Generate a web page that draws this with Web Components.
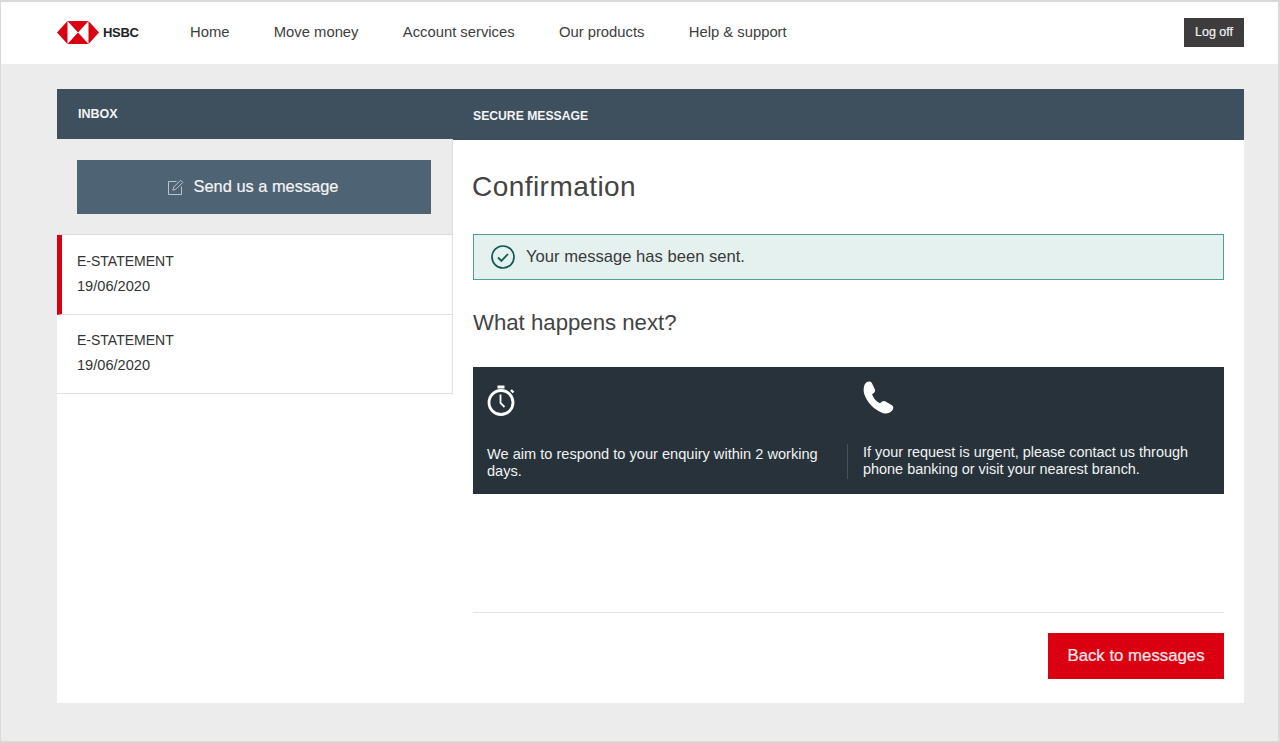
<!DOCTYPE html>
<html lang="en"><head><meta charset="utf-8"><title>HSBC Secure Message</title>
<style>
html,body{margin:0;padding:0;height:743px;overflow:hidden;background:#ececec;font-family:"Liberation Sans",Arial,sans-serif;color:#333}
</style></head><body>
<bank-page>
  <bank-header slot="header">
    <nav-link>Home</nav-link><nav-link>Move money</nav-link><nav-link>Account services</nav-link><nav-link>Our products</nav-link><nav-link>Help &amp; support</nav-link>
  </bank-header>
  <inbox-panel slot="left">
    <message-item active subject="E-STATEMENT" date="19/06/2020"></message-item>
    <message-item subject="E-STATEMENT" date="19/06/2020"></message-item>
  </inbox-panel>
  <secure-message slot="right"></secure-message>
</bank-page>
<script>
function def(name,html){customElements.define(name,class extends HTMLElement{constructor(){super();this.attachShadow({mode:'open'}).innerHTML=typeof html==='function'?html(this):html}})}
def('bank-page',`<style>
:host{display:flex;flex-direction:column;box-sizing:border-box;height:743px;border:solid #d9d9d9;border-width:2px 2px 2px 1px}
main{flex:1;display:flex;padding:25px 34px 38px 56px;min-height:0}
.card{flex:1;display:grid;grid-template-columns:396px 791px;background:#fff}
</style><slot name="header"></slot><main><div class="card"><slot name="left"></slot><slot name="right"></slot></div></main>`);
def('bank-header',`<style>
:host{display:flex;align-items:center;height:62px;background:#fff;padding:0 34px 0 56px;flex:none}
svg{display:block}
.logo{display:flex;align-items:center;gap:4px;width:133px;flex:none;margin-top:-1px}
b{font:700 13px "Liberation Sans",Arial,sans-serif;color:#222;letter-spacing:-.3px}
nav{display:flex;gap:44.300px;flex:1;margin-top:-3px}
button{all:unset;box-sizing:border-box;width:60px;height:29px;margin-top:-2px;background:#3e3c3c;color:#f2f2f2;font:400 12.500px "Liberation Sans",Arial,sans-serif;text-align:center;line-height:29px;-webkit-text-stroke:.2px #f2f2f2}
</style><div class="logo"><svg width="42" height="23" viewBox="0 0 42 23" aria-hidden="true"><path fill="#fff" d="M10.500 0h21v23h-21z"/><path fill="#db0011" d="M0 11.500 10.500 0v23zM42 11.500 31.500 0v23zM10.500 0h21L21 11.500zM10.500 23h21L21 11.500z"/></svg><b>HSBC</b></div><nav><slot></slot></nav><button>Log off</button>`);
def('nav-link',`<style>:host{display:block;font-size:14.800px;color:#3d3d3d;line-height:20px}</style><slot></slot>`);
def('inbox-panel',`<style>
:host{display:flex;flex-direction:column;background:#fff;min-width:0}
.bar{height:50px;background:#3e505d;color:#f5f5f5;font:700 12.500px/50px "Liberation Sans",Arial,sans-serif;padding-left:21px}
.send{box-sizing:border-box;height:96px;background:#ececec;border:solid #dcdcdc;border-width:0 1px 1px 0;padding:21px 21px 20px 20px}
button{all:unset;box-sizing:border-box;display:flex;align-items:center;justify-content:center;gap:10px;width:100%;height:54px;padding-bottom:1px;padding-right:2px;background:#4e6374;color:#f4f4f4;font:500 16.400px "Liberation Sans",Arial,sans-serif;-webkit-text-stroke:.2px #f4f4f4}
</style><div class="bar">INBOX</div><div class="send"><button><svg width="16" height="16" viewBox="0 0 16 16" fill="none" stroke="#b9c4cc" stroke-width="1" aria-hidden="true"><path d="M8.500 2.500H.5v13h13v-8"/><path d="M4.800 11.200l1-3.200 6.800-6.800 2.200 2.200L8 10.200z"/></svg>Send us a message</button></div><slot></slot>`);
def('message-item',el=>`<style>
:host{display:block;box-sizing:border-box;height:79px;background:#fff;border:solid #e0e0e0;border-width:0 1px 1px 0;padding:13px 0 0 20px;font-size:14.600px;line-height:25px;color:#333}
:host([active]){border-left:5px solid #db0011;padding:14px 0 0 15px;height:80px}
.s{font-size:14px}
</style><div class="s">${el.getAttribute('subject')||''}</div><div>${el.getAttribute('date')||''}</div>`);
def('secure-message',`<style>
:host{display:flex;flex-direction:column;min-width:0;background:#fff}
.bar{height:51px;background:#3e505d;color:#f5f5f5;font:700 12.200px/54px "Liberation Sans",Arial,sans-serif;padding-left:20px;flex:none}
.body{flex:1;display:flex;flex-direction:column;padding:0 20px 24px 20px}
h1{font:400 28px/34px "Liberation Sans",Arial,sans-serif;color:#444;margin:30px 0 30px -1px;letter-spacing:.45px}
.alert{box-sizing:border-box;height:46px;display:flex;align-items:center;gap:11px;padding-left:17px;background:#e5f1ef;border:1px solid #4f9f95;font-size:16.600px;color:#3a3a3a}
h2{font:400 22.200px/30px "Liberation Sans",Arial,sans-serif;color:#444;margin:28px 0 29px}
.dark{height:127px;display:grid;grid-template-columns:374px 1fr;background:#27323b;color:#f2f2f2;font-size:14.600px;line-height:17px;flex:none}
.c1{padding:17px 14px 0 14px;display:flex;flex-direction:column}
.c1 svg{height:33px;width:30px;margin-bottom:29px}
.c2{display:flex;flex-direction:column;padding-top:14px;font-size:14.450px}
.c2 svg{margin-left:16px;margin-bottom:29px;height:34px;width:32px}
.c2 p{border-left:1px solid #46525c;padding-left:15px;margin:0;height:35px}
p{margin:0}
.foot{margin-top:auto;border-top:1px solid #e5e5e5;padding-top:20px;display:flex;justify-content:flex-end}
.foot button{all:unset;box-sizing:border-box;width:176px;height:46px;background:#db0011;color:#fbe9ea;font:500 16.800px/46px "Liberation Sans",Arial,sans-serif;text-align:center;-webkit-text-stroke:.2px #fbe9ea}
</style><div class="bar">SECURE MESSAGE</div><div class="body">
<h1>Confirmation</h1>
<div class="alert"><svg width="24" height="24" viewBox="0 0 24 24" fill="none" stroke="#0f5a4e" aria-hidden="true"><circle cx="12" cy="12" r="11" stroke-width="1.700"/><path d="M7 12.500l3.400 3.400L17 9" stroke-width="1.800"/></svg><span>Your message has been sent.</span></div>
<h2>What happens next?</h2>
<div class="dark"><div class="c1"><svg viewBox="0 0 30 33" aria-hidden="true" fill="none" stroke="#fff"><circle cx="14" cy="18.500" r="12" stroke-width="2.800"/><path d="M10.500 1.500h7v3h-7z" fill="#fff" stroke="none"/><path d="M24 6l2.500 2.500" stroke-width="2.400"/><path d="M13.500 10.500v8.500l4 4" stroke-width="1.800"/></svg><p>We aim to respond to your enquiry within 2 working days.</p></div>
<div class="c2"><svg viewBox="0 0 28 30" aria-hidden="true"><path fill="#fff" d="M2.500 1.600C4.600 0 7 .2 7.800 2l2.500 5.200c.6 1.300.2 2.500-.9 3.300l-1.500 1.100c1.100 3.500 3.800 6.500 7 8l1.500-1.300c1-.9 2.300-1 3.400-.3l5.600 3.400c1.600 1 1.700 3.100.2 4.700-1.900 2-4.800 3.300-7.900 2.300C10 26 3 18.500.9 11.300.1 7.800.4 3.700 2.500 1.600z"/></svg><p>If your request is urgent, please contact us through phone banking or visit your nearest branch.</p></div></div>
<div class="foot"><button>Back to messages</button></div>
</div>`);
</script>
</body></html>
